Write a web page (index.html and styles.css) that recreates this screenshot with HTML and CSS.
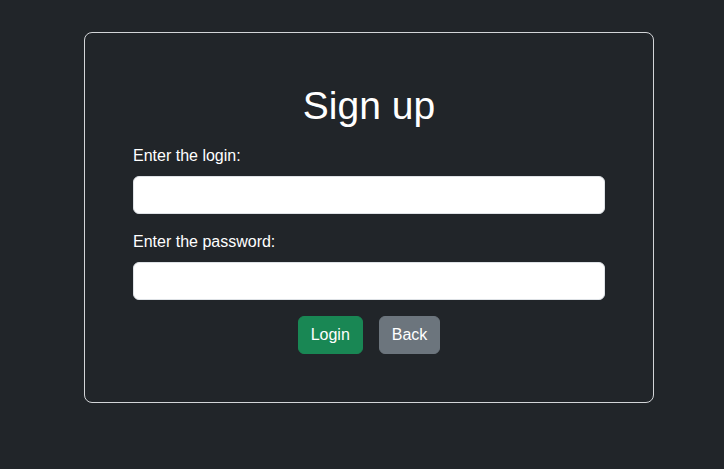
FILE: index.html
```html
<!DOCTYPE html>
<html lang="en">
<head>
<meta charset="utf-8">
<title>Sign up</title>
<link rel="stylesheet" href="styles.css">
</head>
<body>
<main class="page">
  <form class="card">
    <h1 class="title">Sign up</h1>
    <label class="label" for="login">Enter the login:</label>
    <input class="input" id="login" type="text">
    <label class="label" for="password">Enter the password:</label>
    <input class="input" id="password" type="password">
    <div class="actions">
      <button type="button" class="btn btn-success">Login</button>
      <button type="button" class="btn btn-secondary">Back</button>
    </div>
  </form>
</main>
</body>
</html>
```

FILE: styles.css
```css
html, body {
  margin: 0;
  padding: 0;
  background: #212529;
  height: 100%;
}
body {
  font-family: "Liberation Sans", Arial, sans-serif;
  color: #f8f9fa;
  font-size: 16px;
  line-height: 24px;
}
.page {
  padding: 32px 71px 0 84px;
}
.card {
  display: flex;
  flex-direction: column;
  border: 1px solid #d3d5d8;
  border-radius: 8px;
  padding: 49px 48px 48px 48px;
  width: 472px;
}
.title {
  margin: 0 0 14px;
  font-size: 39px;
  line-height: 48px;
  font-weight: 500;
  text-align: center;
  color: #ffffff;
}
.label {
  display: block;
  margin-bottom: 8px;
  color: #ffffff;
}
.input {
  display: block;
  box-sizing: border-box;
  width: 100%;
  height: 38px;
  margin: 0 0 16px;
  border: 1px solid #dee2e6;
  border-radius: 6px;
  background: #ffffff;
  padding: 6px 12px;
  font: inherit;
}
.actions {
  display: flex;
  justify-content: center;
  gap: 16px;
}
.btn {
  font: inherit;
  color: #ffffff;
  border: 1px solid transparent;
  border-radius: 6px;
  padding: 6px 12px;
  line-height: 24px;
  cursor: pointer;
}
.btn-success {
  background: #198754;
  border-color: #198754;
}
.btn-secondary {
  background: #6c757d;
  border-color: #6c757d;
}
```
